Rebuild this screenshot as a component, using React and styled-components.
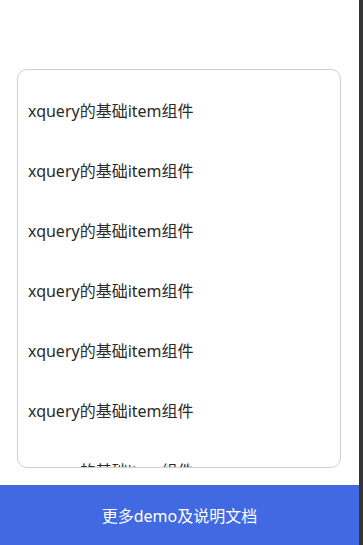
import styled, { createGlobalStyle } from 'styled-components';

const GlobalStyle = createGlobalStyle`
  html, body {
    margin: 0;
    padding: 0;
    height: 100%;
    background: #fff;
  }
  #root {
    height: 100%;
  }
`;

const Frame = styled.div`
  display: flex;
  height: 545px;
  overflow: hidden;
  font-family: "Noto Sans", "Noto Sans CJK SC", sans-serif;
`;

const Page = styled.div`
  flex: 1;
  min-width: 0;
  display: flex;
  flex-direction: column;
  background: #fff;
`;

const SideEdge = styled.div`
  width: 4px;
  background: #353535;
`;

const Content = styled.div`
  flex: 1;
  min-height: 0;
  padding: 69px 18px 17px 17px;
  display: flex;
`;

const ListCard = styled.div`
  flex: 1;
  min-height: 0;
  border: 1px solid #cfcfcf;
  border-radius: 10px;
  padding-top: 10px;
  overflow: hidden;
`;

const Item = styled.div`
  height: 60px;
  flex-shrink: 0;
  display: flex;
  align-items: center;
  padding-left: 10px;
  font-size: 16px;
  color: #2b2b2b;
`;

const BottomBar = styled.button`
  height: 60px;
  flex-shrink: 0;
  border: none;
  background: #4169e1;
  color: #fff;
  font-family: inherit;
  font-size: 16px;
  cursor: pointer;
`;

const items = Array.from({ length: 7 }, () => 'xquery的基础item组件');

export default function App() {
  return (
    <>
      <GlobalStyle />
      <Frame>
        <Page>
          <Content>
            <ListCard>
              {items.map((text, i) => (
                <Item key={i}>{text}</Item>
              ))}
            </ListCard>
          </Content>
          <BottomBar>更多demo及说明文档</BottomBar>
        </Page>
        <SideEdge />
      </Frame>
    </>
  );
}
